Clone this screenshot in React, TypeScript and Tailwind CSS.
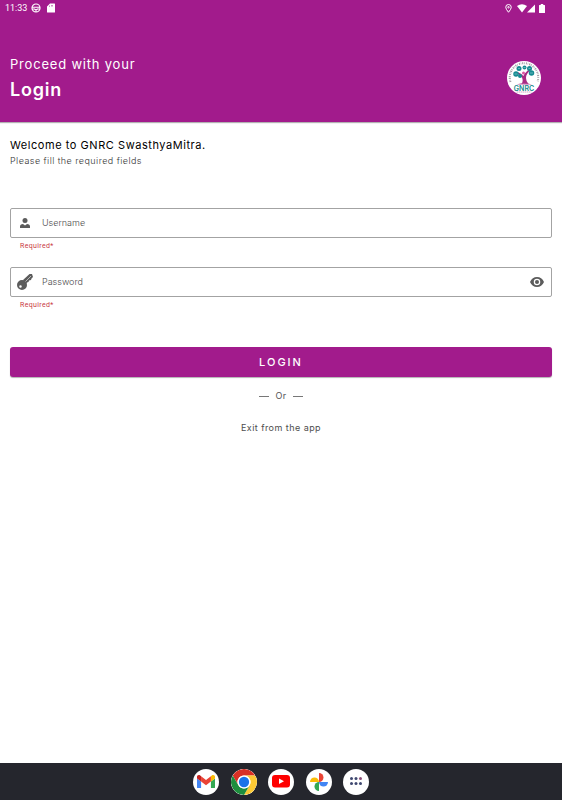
import { useState } from "react";
import type { ReactNode } from "react";

function StatusBar() {
  return (
    <div className="flex h-4 items-center justify-between pr-[17px] pl-[5px] font-['Roboto',sans-serif] text-[9px] leading-4 text-white">
      <div className="flex items-center gap-1">
        <span>11:33</span>
        <svg className="size-[10px]" viewBox="0 0 20 20" fill="none" stroke="currentColor" strokeWidth="2.4">
          <circle cx="10" cy="10" r="8" />
          <path d="M2 8.500h16M3 12h4l3 2 3-2h4M10 13v5" />
        </svg>
        <svg className="ml-px size-[10px]" viewBox="0 0 20 20" fill="currentColor">
          <path fillRule="evenodd" d="M8 1h9q1 0 1 1v16q0 1-1 1H3q-1 0-1-1V7zM7 5h1v3H7zm3-1h1v3h-1zm3 0h1v3h-1z" />
        </svg>
      </div>
      <div className="flex items-center">
        <svg className="mr-[5px] h-[9px] w-[7px]" viewBox="0 0 14 18" fill="none" stroke="currentColor" strokeWidth="2">
          <path d="M7 16.500Q1.500 10 1.500 6.500a5.500 5.500 0 0 1 11 0Q12.500 10 7 16.500z" />
          <circle cx="7" cy="6.500" r="1.500" />
        </svg>
        <svg className="h-[9px] w-[10px]" viewBox="0 0 20 18" fill="currentColor">
          <path d="M0 4Q10-3 20 4L10 17z" />
        </svg>
        <svg className="h-[9px] w-[8px]" viewBox="0 0 16 18" fill="currentColor">
          <path d="M16 1v16H0z" />
        </svg>
        <svg className="ml-1 h-[9px] w-[6px]" viewBox="0 0 12 18" fill="currentColor">
          <path d="M3.500 0h5v2H11q1 0 1 1v14q0 1-1 1H1q-1 0-1-1V3q0-1 1-1h2.500z" />
        </svg>
      </div>
    </div>
  );
}

function GnrcLogo() {
  return (
    <svg className="size-[34px] shrink-0" viewBox="0 0 68 68" role="img" aria-label="GNRC">
      <circle cx="34" cy="34" r="34" fill="#fff" />
      <path
        d="M7 42A28.500 28.500 0 1 1 61 42"
        fill="none"
        stroke="#a39da6"
        strokeWidth="4"
        strokeDasharray="2 1.600 1 1.800 2.400 1.600 1.400 2.600"
      />
      <path
        d="M29 46q4-6 1-13-4-6-11-9l2-2q8 3 12 8 3-8 12-13l2 2q-9 6-9 15 0 7 5 12z"
        fill="#a82b83"
      />
      <circle cx="33" cy="24" r="3" fill="#dc55a3" />
      <path d="M19 47q15-6 31 0z" fill="#b8509b" />
      <g fill="#168b92">
        <circle cx="24" cy="15" r="5" />
        <circle cx="35" cy="13" r="4" />
        <circle cx="45" cy="15" r="5" />
        <circle cx="18" cy="26" r="5.500" />
        <circle cx="26" cy="30" r="4" />
        <circle cx="49" cy="24" r="5.500" />
      </g>
      <path d="M22 15h4M33 13h4M43 15h4M15 26h6M46 24h6" stroke="#b4dfe0" />
      <text
        x="34"
        y="59"
        textAnchor="middle"
        className="fill-[#168b8b] font-['Inter',sans-serif] text-[14px] font-semibold"
      >
        GNRC
      </text>
      <path d="M19 62h30" stroke="#c487b4" strokeWidth="1.500" strokeDasharray="3 1" />
    </svg>
  );
}

function UserIcon() {
  return (
    <svg className="mx-[3px] size-[10px]" viewBox="0 0 20 20" fill="currentColor">
      <circle cx="10" cy="5" r="5" />
      <path d="M0 20v-3q0-5 6-5l4 3 4-3q6 0 6 5v3z" />
    </svg>
  );
}

function KeyIcon() {
  return (
    <svg className="size-4" viewBox="0 0 32 32" fill="currentColor">
      <path
        fillRule="evenodd"
        d="M10 12a10 10 0 1 0 0 20 10 10 0 0 0 0-20M7 22.500a2.500 2.500 0 1 1 0 5 2.500 2.500 0 0 1 0-5"
      />
      <path d="M12 12 25 0h5l2 6-3 3-1 3-4 1-1 3-3 1-3 4z" />
      <path d="M17 15 28 4" stroke="#d4d4d4" strokeWidth="1.500" />
    </svg>
  );
}

function EyeIcon() {
  return (
    <svg className="mr-px h-[10px] w-[14px]" viewBox="0 0 28 20" fill="currentColor">
      <path
        fillRule="evenodd"
        d="M14 0Q4.500 0 0 10q4.500 10 14 10t14-10Q23.500 0 14 0m0 3.500a6.500 6.500 0 1 1 0 13 6.500 6.500 0 0 1 0-13"
      />
      <circle cx="14" cy="10" r="4" />
    </svg>
  );
}

type FieldProps = { id: string; name: string; type: string; icon: ReactNode; action?: ReactNode };

function Field({ id, name, type, icon, action }: FieldProps) {
  return (
    <div>
      <div className="flex h-[30px] items-center rounded-[2px] border border-[#a3a3a3] px-[6px] text-[#5c5c5c]">
        <label htmlFor={id} aria-label={name} className="w-[25px] shrink-0">
          {icon}
        </label>
        <input
          id={id}
          type={type}
          placeholder={name}
          className="h-full min-w-0 flex-1 pb-px text-[9px] font-light text-[#333333] outline-none placeholder:text-[#4d4d4d]"
        />
        {action}
      </div>
      <p className="px-[10px] pt-[2px] font-['Roboto',sans-serif] text-[7px] leading-[13px] tracking-wider text-[#c9393f]">
        Required*
      </p>
    </div>
  );
}

function GmailIcon() {
  return (
    <svg className="w-[18px]" viewBox="52 42 88 66">
      <path fill="#4285f4" d="M58 108h14V74L52 59v43c0 3.320 2.690 6 6 6" />
      <path fill="#34a853" d="M120 108h14c3.320 0 6-2.690 6-6V59l-20 15" />
      <path fill="#fbbc04" d="M120 48v26l20-15v-8c0-7.420-8.470-11.650-14.400-7.200" />
      <path fill="#ea4335" d="M72 74V48l24 18 24-18v26L96 92" />
      <path fill="#c5221f" d="M52 51v8l20 15V48l-5.600-4.200c-5.940-4.450-14.400-.220-14.400 7.200" />
    </svg>
  );
}

function ChromeIcon() {
  return (
    <svg className="size-full" viewBox="0 0 48 48">
      <circle cx="24" cy="24" r="24" fill="#fff" />
      <path fill="#d93025" d="M3.200 12a24 24 0 0 1 41.600 0H24a12 12 0 0 0-10.400 18z" />
      <path fill="#fcc934" d="M44.800 12A24 24 0 0 1 24 48l10.400-18A12 12 0 0 0 24 12z" />
      <path fill="#1e8e3e" d="M24 48A24 24 0 0 1 3.200 12l10.400 18a12 12 0 0 0 20.800 0z" />
      <circle cx="24" cy="24" r="12" fill="#fff" />
      <circle cx="24" cy="24" r="9.500" fill="#1a73e8" />
    </svg>
  );
}

function YoutubeIcon() {
  return (
    <svg className="w-[18px]" viewBox="0 0 36 25">
      <rect width="36" height="25" rx="6" fill="#f00" />
      <path d="m14 7 10 5.500-10 5.500z" fill="#fff" />
    </svg>
  );
}

function PhotosIcon() {
  return (
    <svg className="size-[18px]" viewBox="0 0 36 36">
      <path fill="#fbbc04" d="M0 18a9 9 0 0 1 18 0z" />
      <path fill="#ea4335" d="M18 0a9 9 0 0 1 0 18z" />
      <path fill="#4285f4" d="M36 18a9 9 0 0 1-18 0z" />
      <path fill="#34a853" d="M18 36a9 9 0 0 1 0-18z" />
    </svg>
  );
}

function AppsIcon() {
  return (
    <svg className="w-3" viewBox="0 0 24 17">
      <g fill="#3f4870">
        <circle cx="3" cy="3" r="3" />
        <circle cx="12" cy="3" r="3" />
        <circle cx="3" cy="13" r="3" />
        <circle cx="12" cy="13" r="3" />
        <circle cx="21" cy="13" r="3" />
      </g>
      <circle cx="21" cy="3" r="3" fill="#8b4f78" />
    </svg>
  );
}

const dockApps = [
  { name: "Gmail", icon: <GmailIcon /> },
  { name: "Chrome", icon: <ChromeIcon /> },
  { name: "YouTube", icon: <YoutubeIcon /> },
  { name: "Photos", icon: <PhotosIcon /> },
  { name: "All apps", icon: <AppsIcon /> },
];

export default function App() {
  const [showPassword, setShowPassword] = useState(false);

  return (
    <div className="flex min-h-screen flex-col bg-white font-['Inter',sans-serif]">
      <header className="bg-[#a21b8c] pb-[18px] text-white shadow-[0_1px_1px_rgba(0,0,0,0.3)]">
        <StatusBar />
        <div className="flex items-center justify-between pt-9 pr-[21px] pl-[10px]">
          <h1 className="tracking-wider">
            <span className="block text-[13px] leading-6">Proceed with your</span>
            <span className="block text-[18px] leading-7 font-semibold">Login</span>
          </h1>
          <GnrcLogo />
        </div>
      </header>

      <main className="flex-1 px-[10px] pt-[14px]">
        <h2 className="text-[11px] leading-[18px] tracking-wider text-black">Welcome to GNRC SwasthyaMitra.</h2>
        <p className="text-[9px] leading-[14px] font-light tracking-wider text-[#333333]">
          Please fill the required fields
        </p>

        <form className="pt-10" onSubmit={(event) => event.preventDefault()}>
          <div className="flex flex-col gap-[14px]">
            <Field id="username" name="Username" type="text" icon={<UserIcon />} />
            <Field
              id="password"
              name="Password"
              type={showPassword ? "text" : "password"}
              icon={<KeyIcon />}
              action={
                <button
                  type="button"
                  aria-label="Show password"
                  aria-pressed={showPassword}
                  onClick={() => setShowPassword(!showPassword)}
                >
                  <EyeIcon />
                </button>
              }
            />
          </div>
          <button
            type="submit"
            className="mt-[35px] h-[30px] w-full rounded-[3px] bg-[#a21b8c] text-[11px] font-medium tracking-[2px] text-white shadow-[0_1px_1px_rgba(0,0,0,0.3)]"
          >
            LOGIN
          </button>
        </form>

        <div className="flex items-center justify-center gap-[6px] pt-3 text-[9px] leading-[14px] tracking-wider text-[#555555]">
          <span className="h-px w-[10px] bg-[#777777]" />
          Or
          <span className="h-px w-[10px] bg-[#777777]" />
        </div>
        <div className="flex justify-center pt-[18px]">
          <button type="button" className="text-[9px] leading-[14px] tracking-wider text-[#4d4d4d]">
            Exit from the app
          </button>
        </div>
      </main>

      <nav className="flex h-[37px] items-center justify-center bg-[#25262d]" aria-label="Dock">
        <div className="flex w-44 justify-between">
          {dockApps.map((app) => (
            <button
              key={app.name}
              type="button"
              aria-label={app.name}
              className="flex size-[26px] items-center justify-center overflow-hidden rounded-full bg-white"
            >
              {app.icon}
            </button>
          ))}
        </div>
      </nav>
    </div>
  );
}
